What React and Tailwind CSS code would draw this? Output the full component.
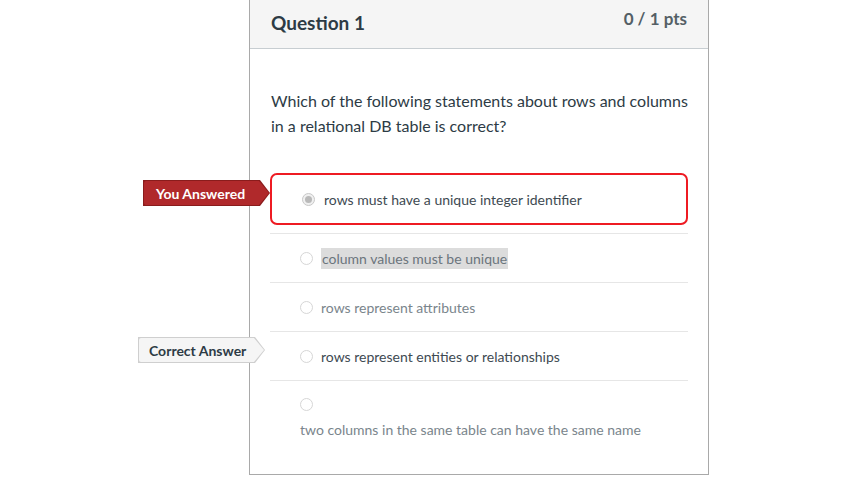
const FONT = "font-['Lato','Open_Sans',sans-serif]"

const Radio = ({ checked = false }) => (
  <span
    className={`flex h-[13px] w-[13px] shrink-0 items-center justify-center rounded-full border ${
      checked ? 'border-[#c8c8c8] bg-[#f0f0f0]' : 'border-[#d6d6d6] bg-white'
    }`}
  >
    {checked && <span className="h-[7px] w-[7px] rounded-full bg-[#b9b9b9]" />}
  </span>
)

const Flag = ({ label, variant }) => {
  const red = variant === 'red'
  return (
    <div
      className={`absolute top-[5px] h-[26px] w-[127px] ${
        red ? 'right-[calc(100%+2px)]' : 'right-[calc(100%+5px)]'
      }`}
    >
      <div
        className={`absolute inset-0 [clip-path:polygon(0_0,calc(100%-10px)_0,100%_50%,calc(100%-10px)_100%,0_100%)] ${
          red ? 'bg-[#8a1c1c]' : 'bg-[#cfcfcf]'
        }`}
      />
      <div
        className={`absolute inset-[1px] rounded-l-[2px] [clip-path:polygon(0_0,calc(100%-10px)_0,100%_50%,calc(100%-10px)_100%,0_100%)] ${
          red ? 'bg-[#b0292b]' : 'bg-[#f5f5f5]'
        }`}
      />
      <span
        className={`relative flex h-full items-center text-[14px] font-bold ${
          red ? 'pl-[13px] text-white' : 'pl-[11px] text-[#2d3b45]'
        }`}
      >
        {label}
      </span>
    </div>
  )
}

const Row = ({ children, flag }) => (
  <div className="relative border-t border-[#e6e6e6]">
    {flag}
    <div className="flex h-[48px] items-center gap-[8px] pl-[30px] text-[14px]">{children}</div>
  </div>
)

export default function App() {
  return (
    <div className={`h-[489px] w-[853px] bg-white ${FONT}`}>
      <div className="ml-[249px] w-[460px] border-x border-b border-[#a9a9a9]">
        {/* Header */}
        <div className="flex h-[49px] justify-between border-b border-[#c7cdd1] bg-[#f5f5f5] px-[21px] pt-[9px]">
          <h2 className="text-[19px] font-bold leading-[28px] text-[#2d3b45]">Question 1</h2>
          <span className="text-[17px] font-bold leading-[20px] text-[#545f66]">0 / 1 pts</span>
        </div>

        <div className="px-[20px] pt-[39px] pb-[34px]">
          <p className="pl-[1px] text-[16px] leading-[25px] text-[#2d3b45]">
            Which of the following statements about rows and columns in a relational DB table is
            correct?
          </p>

          <div className="mt-[35px]">
            {/* You answered */}
            <div className="relative mb-[8px] rounded-[7px] border-2 border-[#ee1b23]">
              <Flag label="You Answered" variant="red" />
              <div className="flex h-[48px] items-center gap-[9px] pl-[30px] text-[14px] text-[#3e4a52]">
                <Radio checked />
                <span>rows must have a unique integer identifier</span>
              </div>
            </div>

            <Row>
              <Radio />
              <span className="bg-[#dcdcdc] px-[1px] text-[#6b757c]">column values must be unique</span>
            </Row>

            <Row>
              <Radio />
              <span className="text-[#7a858c]">rows represent attributes</span>
            </Row>

            <Row flag={<Flag label="Correct Answer" variant="gray" />}>
              <Radio />
              <span className="text-[#3e4a52]">rows represent entities or relationships</span>
            </Row>

            <div className="border-t border-[#e6e6e6] pl-[30px] pt-[17px]">
              <Radio />
              <p className="mt-[9px] text-[14px] leading-[20px] text-[#7a858c]">
                two columns in the same table can have the same name
              </p>
            </div>
          </div>
        </div>
      </div>
    </div>
  )
}
